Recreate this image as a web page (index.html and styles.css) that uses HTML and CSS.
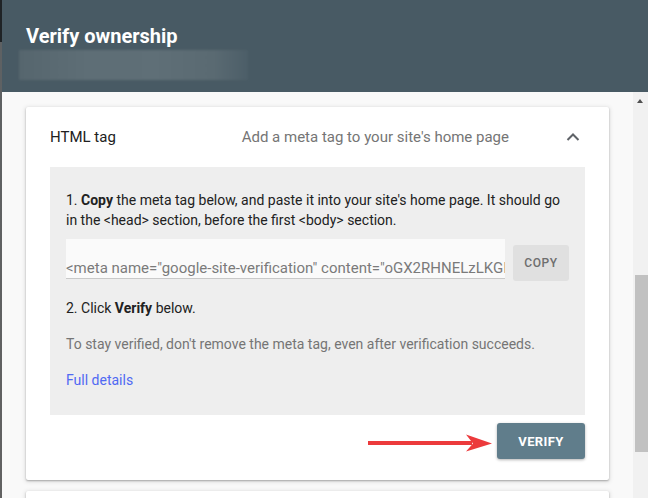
FILE: index.html
```html
<!DOCTYPE html>
<html lang="en">
<head>
    <meta charset="UTF-8">
    <meta name="viewport" content="width=device-width, initial-scale=1.0">
    <title>Verify ownership</title>
    <link rel="stylesheet" href="styles.css">
</head>
<body>
    <div class="window">
        <div class="edge"></div>
        <div class="app">
            <header class="dialog-header">
                <h1>Verify ownership</h1>
                <div class="site-blur"></div>
            </header>

            <div class="dialog-body">
                <main class="content">
                    <section class="method-card">
                        <div class="method-head">
                            <span class="method-name">HTML tag</span>
                            <span class="method-hint">Add a meta tag to your site's home page</span>
                            <svg class="chevron" width="24" height="24" viewBox="0 0 24 24">
                                <polyline points="6.5,15 12,9.5 17.5,15" fill="none" stroke="#5f6368" stroke-width="2"/>
                            </svg>
                        </div>

                        <div class="method-panel">
                            <p class="step">1. <b>Copy</b> the meta tag below, and paste it into your site's home page. It should go in the &lt;head&gt; section, before the first &lt;body&gt; section.</p>

                            <div class="tag-row">
                                <div class="tag-field">&lt;meta name="google-site-verification" content="oGX2RHNELzLKGIxq7Tb3Jd" /&gt;</div>
                                <button class="btn-copy">COPY</button>
                            </div>

                            <p class="step">2. Click <b>Verify</b> below.</p>
                            <p class="note">To stay verified, don't remove the meta tag, even after verification succeeds.</p>
                            <a class="details" href="#">Full details</a>
                        </div>

                        <div class="method-actions">
                            <!-- flecha de anotación -->
                            <svg class="pointer" width="126" height="20" viewBox="0 0 126 20">
                                <rect x="0" y="8" width="104" height="4" fill="#ec3a3c"/>
                                <polygon points="98,1.5 124,10.5 98,18.5 105,10.5" fill="#ec3a3c"/>
                            </svg>
                            <button class="btn-verify">VERIFY</button>
                        </div>
                    </section>

                    <section class="method-card next"></section>
                </main>

                <div class="scrollbar">
                    <div class="scroll-up"></div>
                    <div class="scroll-thumb"></div>
                </div>
            </div>
        </div>
    </div>
</body>
</html>
```

FILE: styles.css
```css
body {
    margin: 0;
    padding: 0;
    font-family: Roboto, 'Noto Sans', sans-serif;
    color: #212121;
    overflow: hidden;
}

.window {
    display: flex;
    width: 648px;
    height: 498px;
    overflow: hidden;
}

.edge {
    width: 2px;
    flex: none;
    background: linear-gradient(#1f2326 0, #1f2326 42px, #5e6163 42px, #626262 100%);
}

.app {
    flex: 1;
    display: flex;
    flex-direction: column;
    min-width: 0;
}

/* Cabecera */
.dialog-header {
    height: 92px;
    box-sizing: border-box;
    padding: 24px 24px 0;
    background: #485a64;
}

.dialog-header h1 {
    margin: 0;
    font-size: 20px;
    line-height: 24px;
    font-weight: 700;
    color: #fff;
}

.site-blur {
    width: 229px;
    height: 30px;
    margin: 2px 0 0 -7px;
    background: linear-gradient(90deg, #56666e 0%, #5e6e76 30%, #5f6f77 60%, #5a6a72 85%, #4c5e68 100%);
    filter: blur(1px);
}

/* Cuerpo */
.dialog-body {
    flex: 1;
    display: flex;
    background: #f9f9f9;
    min-height: 0;
}

.content {
    flex: 1;
    overflow: hidden;
}

.method-card {
    margin: 15px 24px 0;
    padding: 0 24px 21px;
    background: #fff;
    border-radius: 2px;
    box-shadow: 0 1px 2px rgba(0, 0, 0, 0.28), 0 1px 4px 1px rgba(0, 0, 0, 0.1);
}

.method-card.next {
    margin-top: 11px;
    height: 40px;
    padding: 0;
}

.method-head {
    height: 60px;
    display: flex;
    align-items: center;
}

.method-name {
    font-size: 15px;
    flex: 1;
}

.method-hint {
    font-size: 15px;
    color: #757575;
    margin-right: 52px;
}

.chevron {
    flex: none;
    display: block;
}

.method-panel {
    background: #eeeeee;
    padding: 23px 16px 25px;
    font-size: 14px;
    line-height: 20px;
}

.step {
    margin: 0;
}

.step b {
    font-weight: 700;
}

.tag-row {
    display: flex;
    align-items: flex-start;
    gap: 8px;
    margin: 9px 0 17px;
}

.tag-field {
    width: 439px;
    height: 20px;
    padding-top: 19px;
    background: #fafafa;
    border-bottom: 1px solid #c9c9c9;
    color: #7a7a7a;
    font-size: 15px;
    white-space: nowrap;
    overflow: hidden;
}

.btn-copy {
    margin-top: 6px;
    width: 56px;
    height: 36px;
    border: none;
    border-radius: 3px;
    background: #e0e0e0;
    color: #6e6e6e;
    font-family: inherit;
    font-size: 12px;
    font-weight: 500;
    letter-spacing: 0.6px;
    padding: 0;
}

.note {
    margin: 16px 0;
    color: #757575;
}

.details {
    display: block;
    color: #5069f3;
    text-decoration: none;
}

.method-actions {
    margin-top: 8px;
    display: flex;
    justify-content: flex-end;
    align-items: center;
}

.pointer {
    display: block;
    margin-right: 3px;
    margin-top: 4px;
}

.btn-verify {
    width: 88px;
    height: 36px;
    border: none;
    border-radius: 3px;
    background: #607d8b;
    color: #fff;
    font-family: inherit;
    font-size: 13px;
    font-weight: 700;
    letter-spacing: 0.4px;
    box-shadow: 0 1px 3px rgba(0, 0, 0, 0.3);
    padding: 0;
}

/* Barra de desplazamiento */
.scrollbar {
    width: 15px;
    flex: none;
    background: #f1f1f1;
    display: flex;
    flex-direction: column;
}

.scroll-up {
    height: 0;
    width: 0;
    margin: 7px 0 0 4px;
    border-left: 3.5px solid transparent;
    border-right: 3.5px solid transparent;
    border-bottom: 4px solid #505050;
}

.scroll-thumb {
    margin: 172px 0 0 2px;
    height: 177px;
    background: #c1c1c1;
}
```
